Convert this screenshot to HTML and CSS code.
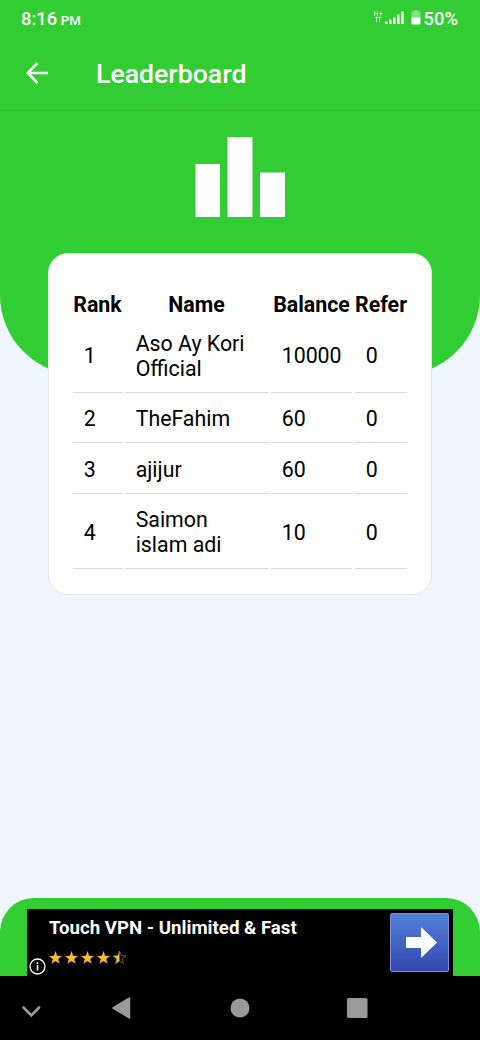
FILE: index.html
```
<!DOCTYPE html>
<html lang="en">
<head>
  <meta charset="UTF-8">
  <title>Leaderboard</title>
  <link rel="stylesheet" href="styles.css">
</head>
<body>
<div class="app">
  <div class="status">
    <div class="time">8:16 <small>PM</small></div>
    <div class="status-right">
      <svg class="signal" width="32" height="16" viewBox="0 0 32 16">
        <g fill="none" stroke="#fff" stroke-width="1" opacity="0.85">
          <path d="M1.500 1v5M4.500 1v5M1 3.500h4M6 3.500h3.500M7.700 2v3.500"/>
          <path d="M3.500 12V6.500M2 7.500h3M6.500 12V6.500M5.500 7.500h3"/>
        </g>
        <path fill="#fff" d="M12 11.500h2.500V14H12zM16 9.500h2.500V14H16zM20 7.500h2.500V14H20zM24 4.500h2.500V14H24zM28 1.500h2.700V14H28z"/>
      </svg>
      <svg class="battery" width="10" height="15" viewBox="0 0 10 15">
        <path fill="#fff" opacity="0.4" d="M3 0h4v1.500h2.500V8h-9V1.500H3z"/>
        <path fill="#fff" d="M.5 7.500h9v6q0 1-1 1h-7q-1 0-1-1z"/>
      </svg>
      <span>50%</span>
    </div>
  </div>

  <div class="bar">
    <svg class="back" width="24" height="24" viewBox="0 0 24 24">
      <path fill="none" stroke="#fff" stroke-width="2.600" d="M23 12H3M12.500 2L2.800 12l9.700 10"/>
    </svg>
    <h1>Leaderboard</h1>
  </div>

  <div class="hero">
    <svg width="90" height="80" viewBox="0 0 90 80">
      <path fill="#fff" d="M.5 27H25v53H.5zM32.500 0h25v80h-25zM65 35.500h25V80H65z"/>
    </svg>
  </div>

  <div class="card">
    <table>
      <colgroup>
        <col class="c-rank"><col class="c-name"><col class="c-balance"><col class="c-refer">
      </colgroup>
      <tr><th>Rank</th><th>Name</th><th>Balance</th><th>Refer</th></tr>
      <tr><td>1</td><td>Aso Ay Kori Official</td><td>10000</td><td>0</td></tr>
      <tr><td>2</td><td>TheFahim</td><td>60</td><td>0</td></tr>
      <tr><td>3</td><td>ajijur</td><td>60</td><td>0</td></tr>
      <tr><td>4</td><td>Saimon islam adi</td><td>10</td><td>0</td></tr>
    </table>
  </div>

  <div class="bottom">
    <div class="ad">
      <svg class="info" width="17" height="17" viewBox="0 0 17 17">
        <circle cx="8.500" cy="8.500" r="7.500" fill="#000" stroke="#fff" stroke-width="1.300"/>
        <path fill="#fff" d="M7.700 4.200h1.600v1.700H7.700zM7.700 7h1.600v5.500H7.700z"/>
      </svg>
      <div class="ad-text">
        <b>Touch VPN - Unlimited &amp; Fast</b>
        <svg class="stars" width="80" height="14" viewBox="0 0 80 14">
          <defs>
            <path id="star" d="M6.500 0l1.700 4.700 4.800.2-3.800 3 1.300 4.900-4-2.800-4 2.800 1.300-4.900L0 4.900l4.800-.2z"/>
          </defs>
          <g fill="#fdb73e">
            <use href="#star"/>
            <use href="#star" x="16"/>
            <use href="#star" x="32"/>
            <use href="#star" x="48"/>
            <path d="M70.500 0v10l-4 2.800 1.300-4.900-3.800-3 4.800-.2z"/>
          </g>
          <use href="#star" x="64" fill="none" stroke="#a8905f" stroke-width=".6"/>
        </svg>
      </div>
      <div class="go">
        <svg width="31" height="31" viewBox="0 0 31 31">
          <path fill="#fff" d="M0 10h15V0l16 15.500L15 31V21H0z"/>
        </svg>
      </div>
    </div>
  </div>

  <div class="nav">
    <svg width="480" height="64" viewBox="0 0 480 64">
      <path fill="none" stroke="#999" stroke-width="2.600" stroke-linecap="round" d="M23.500 31.500l7.800 8 7.800-8"/>
      <path fill="#999" stroke="#999" stroke-width="1.500" stroke-linejoin="round" d="M113 32l16.500-10v20z"/>
      <circle cx="240" cy="32" r="9.500" fill="#999"/>
      <rect x="347" y="22" width="20.500" height="20" rx="1.500" fill="#999"/>
    </svg>
  </div>
</div>
</body>
</html>
```
FILE: styles.css
```
* {
  margin: 0;
  padding: 0;
  box-sizing: border-box;
}

body {
  background: #eff6ff;
  font-family: Roboto, "Liberation Sans", sans-serif;
  color: #000;
}

.app {
  width: 480px;
  height: 1040px;
  display: flex;
  flex-direction: column;
  overflow: hidden;
}

svg {
  display: block;
  flex: none;
}

.status {
  height: 37px;
  padding: 0 22px 0 21px;
  background: #32cd32;
  color: #fff;
  display: flex;
  align-items: center;
  justify-content: space-between;
  font-size: 18.4px;
  font-weight: 500;
}

.time small {
  font-size: 13.3px;
  margin-left: -1px;
}

.status-right {
  display: flex;
  align-items: center;
}

.signal {
  margin-bottom: 2px;
}

.battery {
  margin: 0 3px 2px 6px;
}

.bar {
  height: 73px;
  padding-left: 25px;
  background: #32cd32;
  color: #fff;
  display: flex;
  align-items: center;
  gap: 47px;
}

.back {
  margin-bottom: 2px;
}

.bar h1 {
  font-size: 26.67px;
  font-weight: 500;
}

.hero {
  height: 265px;
  flex: none;
  padding-top: 26px;
  background: #32cd32;
  border-top: 1px solid #2eb92e;
  border-radius: 0 0 80px 80px;
  display: flex;
  justify-content: center;
  align-items: flex-start;
}

.card {
  width: 384px;
  height: 342px;
  margin: -122px auto 0;
  padding: 33px 22px 0 21px;
  background: #fff;
  border: 1px solid #e2e6ec;
  border-radius: 20px;
}

table {
  width: 340px;
  table-layout: fixed;
  border-collapse: separate;
  border-spacing: 3px;
  font-size: 21.33px;
  line-height: 25.33px;
}

.c-rank {
  width: 49px;
}

.c-name {
  width: 143px;
}

.c-balance {
  width: 81px;
}

.c-refer {
  width: 52px;
}

th {
  padding: 2px 0 0;
  white-space: nowrap;
}

td {
  padding: 10.5px 10.67px;
  text-align: left;
  border-bottom: 1px solid #d8d8d8;
}

.bottom {
  height: 78px;
  margin-top: auto;
  padding: 11px 27px 0;
  background: #32cd32;
  border-radius: 34px 34px 0 0;
}

.ad {
  height: 67px;
  padding: 4px 4px 0 2px;
  background: #000;
  color: #fff;
  display: flex;
}

.info {
  align-self: flex-end;
  margin-bottom: 1px;
}

.ad-text {
  flex: 1;
  padding: 5px 0 0 3px;
}

.ad-text b {
  display: block;
  font-size: 18.67px;
  line-height: 21px;
}

.stars {
  margin-top: 12px;
}

.go {
  width: 59px;
  height: 59px;
  padding-left: 3px;
  background: linear-gradient(#5280d8, #3447ae);
  border: 1px solid #7d90d8;
  border-radius: 2px;
  display: flex;
  align-items: center;
  justify-content: center;
}

.nav {
  height: 64px;
  background: #000;
}
```
